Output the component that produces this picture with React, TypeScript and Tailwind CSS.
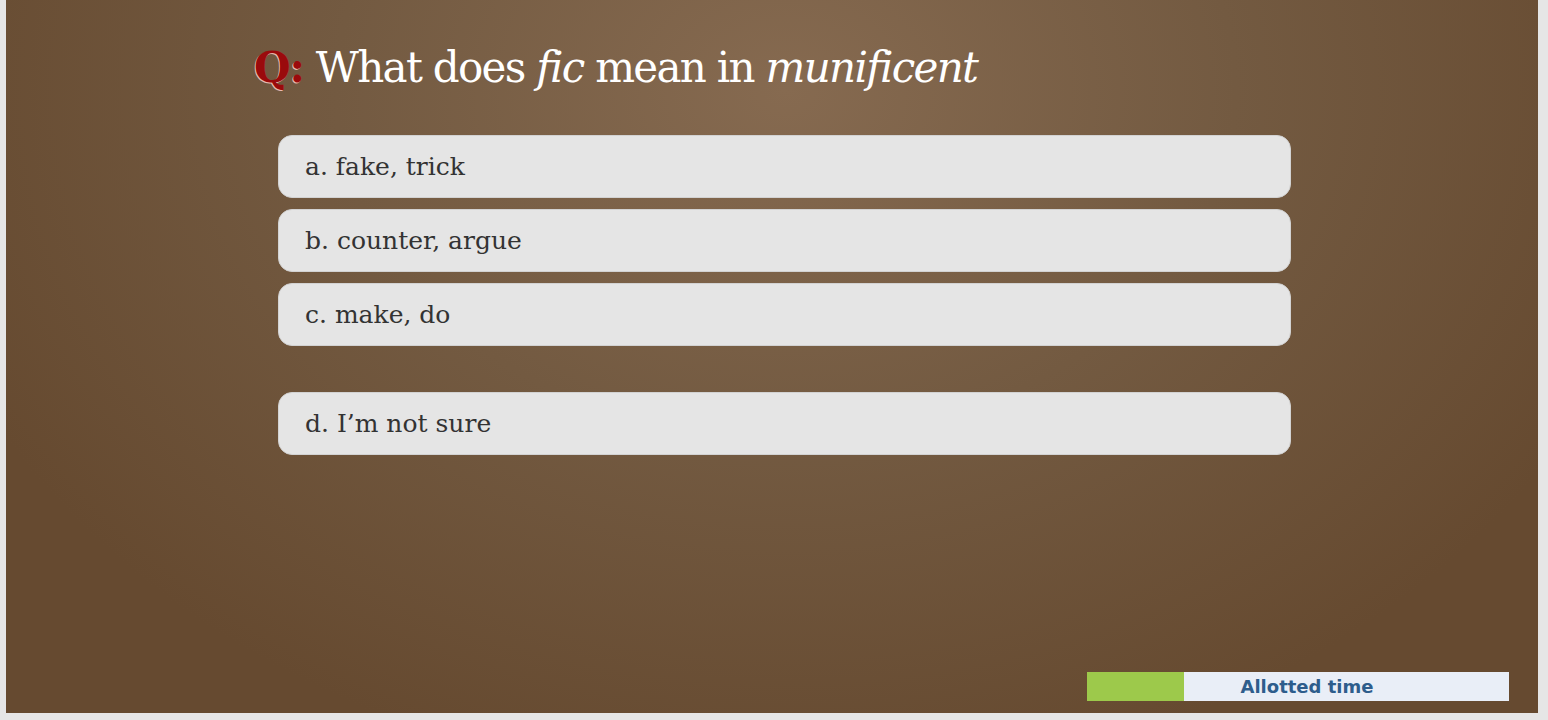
export default function App() {
  const options = ["a. fake, trick", "b. counter, argue", "c. make, do"];
  return (
    <div className="w-[1548px] h-[720px] bg-[#e6e6e6] pl-[6px] pr-[10px] pb-[7px]">
      <div
        className="relative w-full h-full bg-[radial-gradient(ellipse_900px_700px_at_780px_90px,#866a50_0%,#735a41_50%,#664a30_100%)] flex flex-col"
        style={{ fontFamily: '"DejaVu Serif", Georgia, serif' }}
      >
        <h1 className="ml-[248px] mt-[40px] text-[42px] leading-[56px] text-white tracking-[-1.7px]">
          <span className="text-[#9a0a0c] font-bold tracking-[-1px] [text-shadow:-1px_1px_0_#e9b9b0]">Q:</span>{" "}
          What does <i>fic</i> mean in <i>munificent</i>
        </h1>
        <div className="ml-[272px] mt-[39px] w-[1013px] flex flex-col gap-[11px]">
          {options.map((o) => (
            <div
              key={o}
              className="h-[63px] rounded-[14px] bg-[#e5e5e5] border border-[#d2d2d2] flex items-center pl-[26px] text-[25px] text-[#333333]"
            >
              {o}
            </div>
          ))}
          <div className="mt-[35px] h-[63px] rounded-[14px] bg-[#e5e5e5] border border-[#d2d2d2] flex items-center pl-[26px] text-[25px] text-[#333333]">
            d. I’m not sure
          </div>
        </div>
        <div className="absolute left-[1081px] top-[672px] w-[422px] h-[29px] bg-[#e9eef7] flex items-center justify-center">
          <div className="absolute left-0 top-0 h-full w-[97px] bg-[#9dc94b]" />
          <span
            className="relative text-[18px] font-bold text-[#2e5d8c] ml-[18px]"
            style={{ fontFamily: '"DejaVu Sans", Verdana, sans-serif' }}
          >
            Allotted time
          </span>
        </div>
      </div>
    </div>
  );
}
